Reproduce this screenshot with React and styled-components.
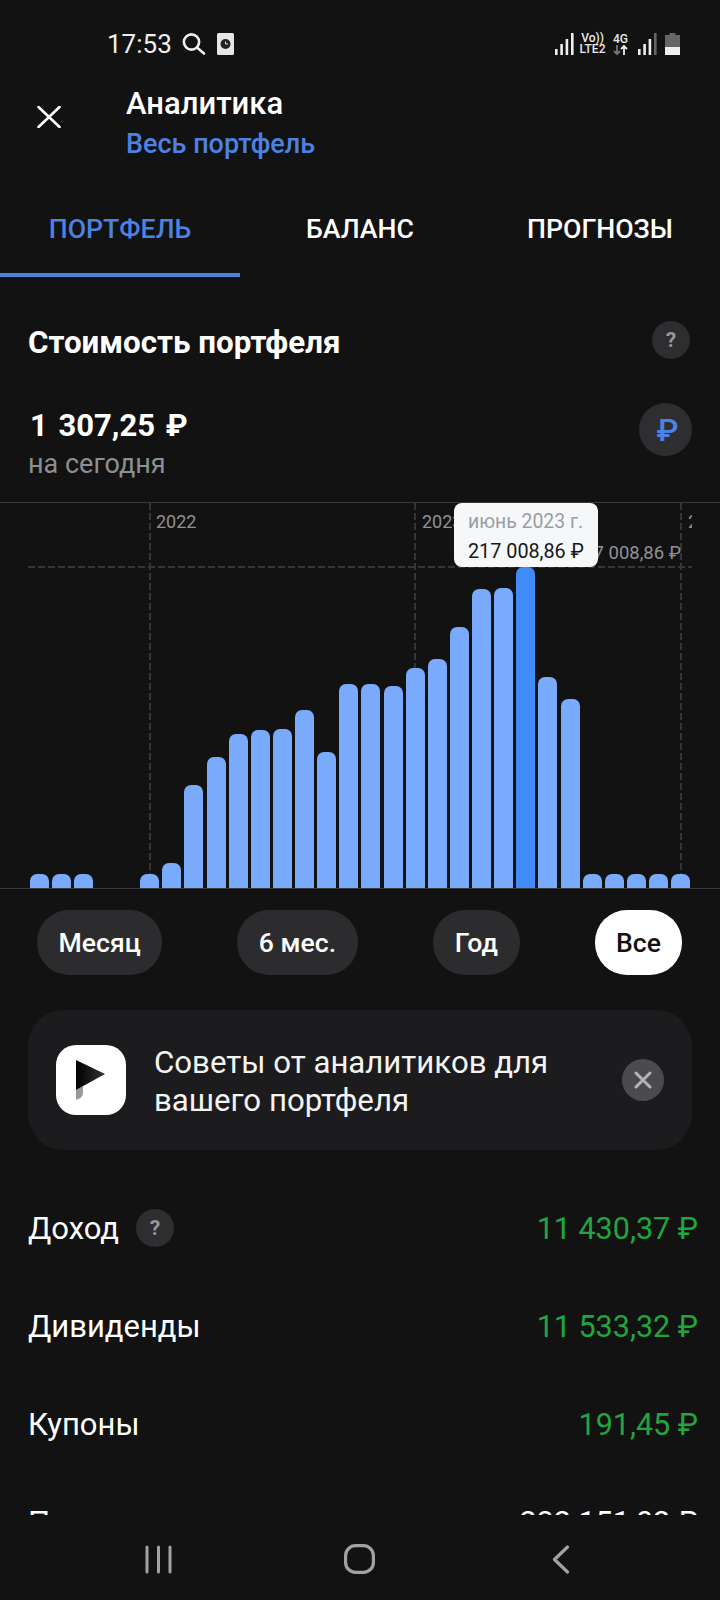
import React from 'react'
import styled, { createGlobalStyle } from 'styled-components'

const Global = createGlobalStyle`
html, body { margin: 0; padding: 0; background: #121213; }
* { box-sizing: border-box; }
`

const Screen = styled.div`
width: 720px;
height: 1600px;
background: #121213;
color: #fff;
font-family: Roboto, "Liberation Sans", sans-serif;
display: flex;
flex-direction: column;
overflow: hidden;
`
const Content = styled.div`
height: 1515px;
overflow: hidden;
flex-shrink: 0;
`
const StatusBar = styled.div`
height: 88px;
padding: 0 40px 0 107px;
display: flex;
align-items: center;
justify-content: space-between;
`
const StatusLeft = styled.div`
display: flex;
align-items: center;
gap: 11px;
`
const Time = styled.span`
font-size: 26px;
color: #eee;
width: 64px;
`
const StatusRight = styled.div`
display: flex;
align-items: center;
`
const NetStack = styled.div`
display: flex;
flex-direction: column;
align-items: center;
width: ${p => p.$w}px;
margin-left: ${p => p.$ml}px;
font-size: 12px;
line-height: 11px;
font-weight: 500;
color: #e8e8e8;
`
const Header = styled.div`
height: 102px;
display: flex;
align-items: flex-start;
`
const CloseBtn = styled.div`
width: 126px;
padding: 18px 0 0 37px;
`
const TitleBlock = styled.div`
display: flex;
flex-direction: column;
`
const Title = styled.div`
font-size: 31px;
line-height: 34px;
font-weight: 500;
margin-top: -1px;
`
const Subtitle = styled.div`
font-size: 27px;
line-height: 30px;
font-weight: 500;
color: #4c82e2;
margin-top: 8px;
`
const Tabs = styled.div`
display: grid;
grid-template-columns: repeat(3, 240px);
height: 87px;
`
const Tab = styled.div`
display: flex;
align-items: flex-start;
justify-content: center;
padding-top: 24px;
font-size: 26.7px;
line-height: 30px;
font-weight: 500;
color: ${p => (p.$active ? '#4c82e2' : '#fff')};
border-bottom: 4px solid ${p => (p.$active ? '#4c82e2' : 'transparent')};
`
const SectionHead = styled.div`
height: 126px;
padding: 0 30px 0 28px;
display: flex;
align-items: center;
justify-content: space-between;
`
const SectionTitle = styled.div`
font-size: 31.3px;
font-weight: 700;
padding-top: 4px;
`
const Help = styled.div`
width: 38px;
height: 38px;
border-radius: 50%;
background: #2e2e30;
color: #98989b;
font-size: 21px;
font-weight: 700;
display: flex;
align-items: center;
justify-content: center;
`
const ValueRow = styled.div`
height: 99px;
padding: 0 28px 0 28px;
display: flex;
align-items: flex-start;
justify-content: space-between;
`
const ValueBlock = styled.div`
display: flex;
flex-direction: column;
`
const Value = styled.div`
font-size: 31px;
line-height: 36px;
font-weight: 700;
padding-left: 2px;
margin-top: 5px;
word-spacing: 3px;
`
const ValueSub = styled.div`
font-size: 27px;
line-height: 30px;
color: #8c8f94;
margin-top: 5px;
`
const CurrencyBtn = styled.div`
width: 53px;
height: 53px;
border-radius: 50%;
background: #2e2e30;
color: #4c82e2;
font-size: 32px;
font-weight: 500;
padding-left: 4px;
display: flex;
align-items: center;
justify-content: center;
`
const Chart = styled.div`
position: relative;
height: 387px;
border-top: 1px solid #39393b;
border-bottom: 1px solid #39393b;
overflow: hidden;
`
const Bars = styled.div`
height: 100%;
padding-left: 29.6px;
display: flex;
align-items: flex-end;
gap: 3.13px;
position: relative;
`
const Bar = styled.div`
width: 19px;
flex-shrink: 0;
border-radius: 7px 7px 0 0;
background: ${p => (p.$selected ? '#3f8bf7' : '#79aafb')};
`
const VLine = styled.div`
position: absolute;
top: 0;
bottom: 0;
left: ${p => p.$x}px;
width: 2px;
background: repeating-linear-gradient(to bottom, #353537 0 7px, transparent 7px 10px);
`
const HLine = styled.div`
position: absolute;
top: 63px;
left: 28px;
width: 664px;
height: 2px;
background: repeating-linear-gradient(to right, #353537 0 7px, transparent 7px 10px);
`
const YearLabel = styled.div`
position: absolute;
top: 7px;
left: ${p => p.$x}px;
width: ${p => p.$w || 50}px;
overflow: hidden;
font-size: 18px;
line-height: 24px;
color: #8f9196;
`
const MaxLabel = styled.div`
position: absolute;
top: 38px;
right: 39px;
font-size: 18.5px;
line-height: 24px;
color: #8f9196;
white-space: nowrap;
`
const Tooltip = styled.div`
position: absolute;
top: 0;
left: 454px;
width: 144px;
height: 64px;
border-radius: 8px;
background: #f6f7f8;
padding: 7px 0 0 14px;
`
const TipDate = styled.div`
font-size: 19.4px;
line-height: 24px;
color: #9a9da3;
`
const TipValue = styled.div`
font-size: 19.8px;
line-height: 24px;
margin-top: 6px;
color: #14161a;
`
const Periods = styled.div`
height: 121px;
padding: 21px 38px 0 37px;
display: flex;
justify-content: space-between;
align-items: flex-start;
`
const Period = styled.div`
height: 65px;
padding: 0 ${p => p.$pad}px;
border-radius: 32px;
background: ${p => (p.$active ? '#fff' : '#2c2c2e')};
color: ${p => (p.$active ? '#111' : '#fff')};
font-size: 26.6px;
font-weight: 500;
display: flex;
align-items: center;
`
const Banner = styled.div`
margin: 0 28px;
height: 140px;
border-radius: 36px;
background: #1c1c1e;
padding: 0 28px;
display: flex;
align-items: center;
`
const LogoTile = styled.div`
width: 70px;
height: 70px;
border-radius: 20px;
background: #fff;
flex-shrink: 0;
display: flex;
align-items: center;
justify-content: center;
`
const BannerText = styled.div`
font-size: 31.2px;
line-height: 38px;
margin: 4px 0 0 28px;
width: 450px;
flex-shrink: 0;
color: #f4f4f4;
`
const DismissBtn = styled.div`
width: 42px;
height: 42px;
border-radius: 50%;
background: #4b4b4d;
margin-left: 18px;
display: flex;
align-items: center;
justify-content: center;
`
const Rows = styled.div`
padding: 29px 22px 0 28px;
`
const Row = styled.div`
height: 98px;
display: flex;
align-items: center;
justify-content: space-between;
font-size: 31px;
`
const RowLabel = styled.div`
display: flex;
align-items: center;
gap: 17px;
`
const RowValue = styled.div`
font-size: 30.5px;
color: ${p => p.$color || '#fff'};
`
const NavBar = styled.div`
flex: 1;
display: flex;
align-items: flex-start;
`
const NavSlot = styled.div`
padding-top: ${p => p.$top}px;
padding-left: ${p => p.$left}px;
line-height: 0;
`

const Signal = ({ dim, ml = 0 }) => (
  <svg width="19" height="22" viewBox="0 0 19 22" style={{ marginLeft: ml }}>
    <rect x="0" y="16" width="2.6" height="6" fill="#eee" />
    <rect x="5.3" y="11" width="2.6" height="11" fill="#eee" />
    <rect x="10.6" y="6" width="2.6" height="16" fill="#eee" />
    <rect x="16" y="0" width="2.6" height="22" fill={dim ? '#666' : '#eee'} />
  </svg>
)

const heights = [14, 14, 14, 0, 0, 14, 25, 103, 131, 154, 158, 159, 178, 136, 204, 204, 202, 220, 229, 261, 299, 300, 321, 211, 189, 14, 14, 14, 14, 14]

const rows = [
  { label: 'Дивиденды', value: '11 533,32 ₽', color: '#21a53f' },
  { label: 'Купоны', value: '191,45 ₽', color: '#21a53f' },
  { label: 'Пополнения', value: '232 151,02 ₽' },
]

const App = () => {
  return (
    <Screen>
      <Global />
      <Content>
        <StatusBar>
          <StatusLeft>
            <Time>17:53</Time>
            <svg width="24" height="22" viewBox="0 0 24 22" fill="none" stroke="#eee" strokeWidth="2.6" strokeLinecap="round">
              <circle cx="9.5" cy="9" r="7.6" />
              <path d="M15 14.5 L22 20.5" />
            </svg>
            <svg width="17" height="22" viewBox="0 0 17 22">
              <rect width="17" height="22" rx="1.5" fill="#e6e6e6" />
              <circle cx="8.5" cy="11" r="5" fill="#222" />
              <path d="M8.5 8.5 V11 H11" stroke="#e6e6e6" strokeWidth="1" fill="none" />
            </svg>
          </StatusLeft>
          <StatusRight>
            <Signal />
            <NetStack $w={27} $ml={5}>
              <span>Vo))</span>
              <span>LTE2</span>
            </NetStack>
            <NetStack $w={15} $ml={7}>
              <span>4G</span>
              <svg width="15" height="10" viewBox="0 0 15 10" fill="none" strokeWidth="1.8">
                <path d="M4 0 V9 M1 6 L4 9 L7 6" stroke="#777" />
                <path d="M11 10 V1 M8 4 L11 1 L14 4" stroke="#eee" />
              </svg>
            </NetStack>
            <Signal dim ml={10} />
            <svg width="15" height="22" viewBox="0 0 15 22" style={{ marginLeft: 8 }}>
              <path d="M4.5 0 H10.5 V2 H15 V14 H0 V2 H4.5 Z" fill="#666" />
              <rect y="14" width="15" height="8" fill="#eee" />
            </svg>
          </StatusRight>
        </StatusBar>

        <Header>
          <CloseBtn>
            <svg width="24" height="22" viewBox="0 0 24 22" stroke="#fff" strokeWidth="2.6" strokeLinecap="round">
              <path d="M1.5 1 L22.5 21 M22.5 1 L1.5 21" />
            </svg>
          </CloseBtn>
          <TitleBlock>
            <Title>Аналитика</Title>
            <Subtitle>Весь портфель</Subtitle>
          </TitleBlock>
        </Header>

        <Tabs>
          <Tab $active>ПОРТФЕЛЬ</Tab>
          <Tab>БАЛАНС</Tab>
          <Tab>ПРОГНОЗЫ</Tab>
        </Tabs>

        <SectionHead>
          <SectionTitle>Стоимость портфеля</SectionTitle>
          <Help>?</Help>
        </SectionHead>

        <ValueRow>
          <ValueBlock>
            <Value>1 307,25 ₽</Value>
            <ValueSub>на сегодня</ValueSub>
          </ValueBlock>
          <CurrencyBtn>₽</CurrencyBtn>
        </ValueRow>

        <Chart>
          <VLine $x={149} />
          <VLine $x={414} />
          <VLine $x={680} />
          <HLine />
          <YearLabel $x={156}>2022</YearLabel>
          <YearLabel $x={422}>2023</YearLabel>
          <YearLabel $x={688} $w={4}>2024</YearLabel>
          <MaxLabel>217 008,86 ₽</MaxLabel>
          <Bars>
            {heights.map((h, i) => (
              <Bar key={i} $selected={i === 22} style={{ height: h }} />
            ))}
          </Bars>
          <Tooltip>
            <TipDate>июнь 2023 г.</TipDate>
            <TipValue>217 008,86 ₽</TipValue>
          </Tooltip>
        </Chart>

        <Periods>
          <Period $pad={21.5}>Месяц</Period>
          <Period $pad={21.5}>6 мес.</Period>
          <Period $pad={22}>Год</Period>
          <Period $pad={21} $active>Все</Period>
        </Periods>

        <Banner>
          <LogoTile>
            <svg width="30" height="40" viewBox="0 0 30 40">
              <defs>
                <linearGradient id="flag" x1="0" x2="1" y1="0" y2="0">
                  <stop offset="0" stopColor="#000" />
                  <stop offset="1" stopColor="#333" />
                </linearGradient>
              </defs>
              <path d="M0 30 L7 26 V33 Q7 38 0 40 Z" fill="#9a9a9a" />
              <path d="M0 0 L29 14 L0 30 Z" fill="url(#flag)" />
            </svg>
          </LogoTile>
          <BannerText>Советы от аналитиков для вашего портфеля</BannerText>
          <DismissBtn>
            <svg width="18" height="18" viewBox="0 0 18 18" stroke="#b4b4b6" strokeWidth="3" strokeLinecap="round">
              <path d="M2 2 L16 16 M16 2 L2 16" />
            </svg>
          </DismissBtn>
        </Banner>

        <Rows>
          <Row>
            <RowLabel>
              Доход
              <Help>?</Help>
            </RowLabel>
            <RowValue $color="#21a53f">11 430,37 ₽</RowValue>
          </Row>
          {rows.map(r => (
            <Row key={r.label}>
              <RowLabel>{r.label}</RowLabel>
              <RowValue $color={r.color}>{r.value}</RowValue>
            </Row>
          ))}
        </Rows>
      </Content>

      <NavBar>
        <NavSlot $top={30} $left={145}>
          <svg width="27" height="29" viewBox="0 0 27 29" stroke="#a2a2a2" strokeWidth="3" strokeLinecap="round">
            <path d="M2 2 V27 M13.5 2 V27 M25 2 V27" />
          </svg>
        </NavSlot>
        <NavSlot $top={29} $left={172}>
          <svg width="31" height="30" viewBox="0 0 31 30" fill="none" stroke="#a2a2a2" strokeWidth="3.2">
            <rect x="1.6" y="1.6" width="27.8" height="26.8" rx="10" />
          </svg>
        </NavSlot>
        <NavSlot $top={30} $left={177}>
          <svg width="18" height="29" viewBox="0 0 18 29" fill="none" stroke="#a2a2a2" strokeWidth="3.2" strokeLinecap="round" strokeLinejoin="round">
            <path d="M15.5 2 L2.5 14.5 L15.5 27" />
          </svg>
        </NavSlot>
      </NavBar>
    </Screen>
  )
}

export default App
